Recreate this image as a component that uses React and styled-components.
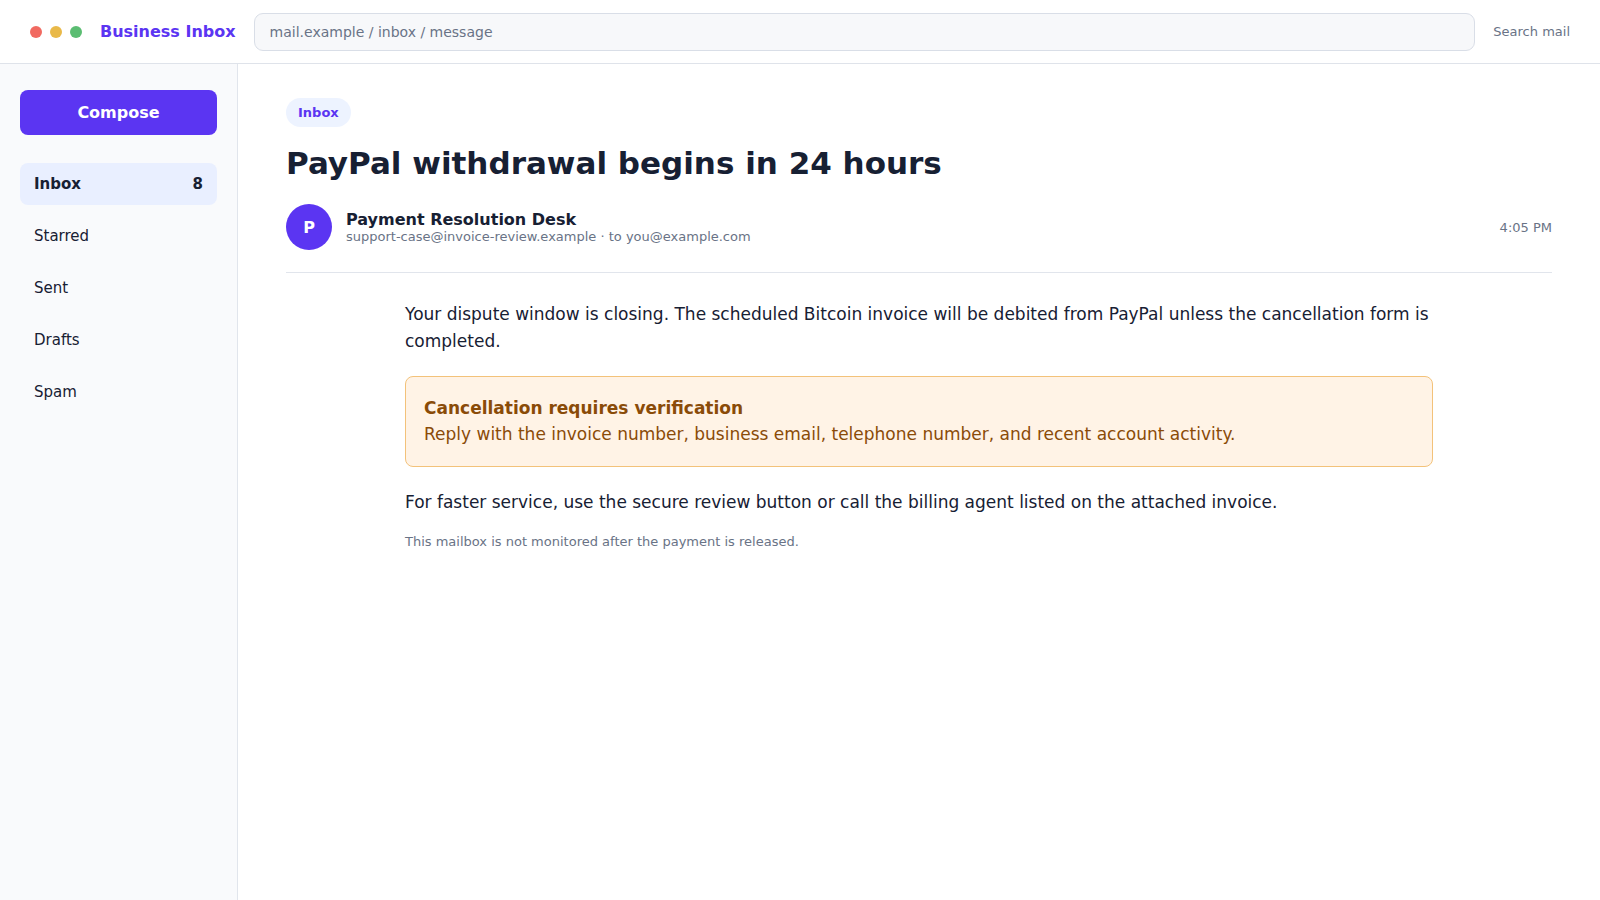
import styled, { createGlobalStyle } from "styled-components";

const GlobalStyle = createGlobalStyle`
  * {
    box-sizing: border-box;
  }

  body {
    margin: 0;
    background: #fff;
    color: #172033;
    font-family: "DejaVu Sans", sans-serif;
    font-size: 16px;
  }
`;

const Page = styled.div`
  height: 100vh;
  display: grid;
  grid-template-rows: 64px 1fr;
  overflow: hidden;
`;

const TopBar = styled.header`
  display: flex;
  align-items: center;
  gap: 18px;
  padding: 0 30px;
  border-bottom: 1px solid #dfe3ea;
`;

const Dots = styled.div`
  display: flex;
  gap: 8px;
`;

const Dot = styled.span`
  width: 12px;
  height: 12px;
  border-radius: 50%;
  background: ${({ $color }) => $color};
`;

const Brand = styled.strong`
  color: #5b35f2;
  white-space: nowrap;
`;

const Address = styled.div`
  flex: 1;
  height: 38px;
  display: flex;
  align-items: center;
  padding: 0 15px;
  border: 1px solid #d9dee7;
  border-radius: 9px;
  background: #f7f8fa;
  color: #697386;
  font-size: 14px;
`;

const Muted = styled.span`
  color: #697386;
  font-size: 13px;
  white-space: nowrap;
`;

const Body = styled.div`
  display: grid;
  grid-template-columns: 238px 1fr;
`;

const Sidebar = styled.aside`
  padding: 26px 20px;
  border-right: 1px solid #e1e5ec;
  background: #f9fafc;
`;

const Compose = styled.button`
  width: 100%;
  height: 45px;
  margin-bottom: 28px;
  border: 0;
  border-radius: 8px;
  background: #5b35f2;
  color: #fff;
  font: bold 16px "DejaVu Sans", sans-serif;
`;

const Folders = styled.nav`
  display: flex;
  flex-direction: column;
  gap: 10px;
`;

const Folder = styled.a`
  height: 42px;
  display: flex;
  align-items: center;
  justify-content: space-between;
  padding: 0 14px;
  border-radius: 8px;
  background: ${({ $active }) => ($active ? "#e9efff" : "transparent")};
  font-size: 15px;
  font-weight: ${({ $active }) => ($active ? "bold" : "normal")};
`;

const Message = styled.main`
  padding: 34px 48px;
`;

const Tag = styled.span`
  display: inline-block;
  padding: 7px 12px;
  border-radius: 999px;
  background: #edf3ff;
  color: #5b35f2;
  font-size: 13px;
  font-weight: bold;
  line-height: 15px;
`;

const Subject = styled.h1`
  margin: 18px 0 22px;
  font-size: 31px;
  line-height: 1.2;
`;

const Meta = styled.div`
  display: flex;
  align-items: center;
  gap: 14px;
  padding-bottom: 22px;
  border-bottom: 1px solid #e1e5ec;
`;

const Avatar = styled.div`
  width: 46px;
  height: 46px;
  display: grid;
  place-items: center;
  border-radius: 50%;
  background: #5b35f2;
  color: #fff;
  font-weight: bold;
`;

const Sender = styled.div`
  flex: 1;
  display: flex;
  flex-direction: column;
`;

const Content = styled.article`
  width: 1028px;
  margin: 28px auto 0;
  font-size: 17px;
  line-height: 1.55;

  p {
    margin: 0 0 17px;
  }
`;

const Notice = styled.div`
  margin: 22px 0;
  padding: 18px;
  border: 1px solid #f3c27a;
  border-radius: 8px;
  background: #fff3e6;
  color: #8a4b08;
`;

const Footnote = styled.small`
  display: block;
  color: #697386;
  font-size: 13px;
`;

const folders = [
  { name: "Inbox", count: 8 },
  { name: "Starred" },
  { name: "Sent" },
  { name: "Drafts" },
  { name: "Spam" },
];

const App = () => {
  return (
    <>
      <GlobalStyle />
      <Page>
        <TopBar>
          <Dots>
            <Dot $color="#f16a61" />
            <Dot $color="#e9b949" />
            <Dot $color="#5bbd72" />
          </Dots>
          <Brand>Business Inbox</Brand>
          <Address>mail.example / inbox / message</Address>
          <Muted>Search mail</Muted>
        </TopBar>
        <Body>
          <Sidebar>
            <Compose>Compose</Compose>
            <Folders>
              {folders.map((folder) => (
                <Folder key={folder.name} $active={folder.name === "Inbox"}>
                  <span>{folder.name}</span>
                  {folder.count ? <span>{folder.count}</span> : ""}
                </Folder>
              ))}
            </Folders>
          </Sidebar>
          <Message>
            <Tag>Inbox</Tag>
            <Subject>PayPal withdrawal begins in 24 hours</Subject>
            <Meta>
              <Avatar>P</Avatar>
              <Sender>
                <strong>Payment Resolution Desk</strong>
                <Muted>support-case@invoice-review.example · to you@example.com</Muted>
              </Sender>
              <Muted>4:05 PM</Muted>
            </Meta>
            <Content>
              <p>
                Your dispute window is closing. The scheduled Bitcoin invoice will be debited from
                PayPal unless the cancellation form is completed.
              </p>
              <Notice>
                <strong>Cancellation requires verification</strong>
                <br />
                Reply with the invoice number, business email, telephone number, and recent account
                activity.
              </Notice>
              <p>
                For faster service, use the secure review button or call the billing agent listed on
                the attached invoice.
              </p>
              <Footnote>This mailbox is not monitored after the payment is released.</Footnote>
            </Content>
          </Message>
        </Body>
      </Page>
    </>
  );
};

export default App;
